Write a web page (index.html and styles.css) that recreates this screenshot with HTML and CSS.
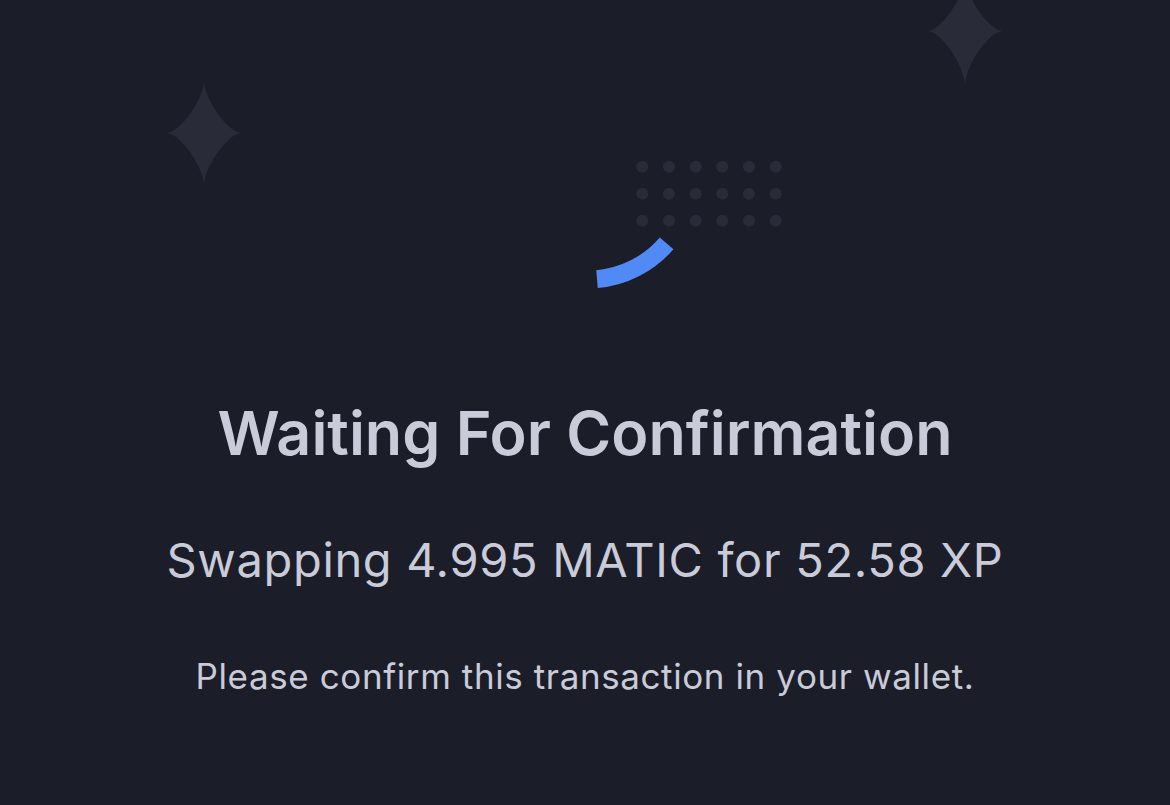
FILE: index.html
```html
<!DOCTYPE html>
<html lang="en">
    <head>
        <title>Waiting For Confirmation</title>
        <meta charset="utf-8">
        <meta name="viewport" content="width=device-width, initial-scale=1.0">
        <link rel="stylesheet" href="styles.css">
    </head>
    <body>
        <svg class="sparkle sparkle-left" width="76" height="106" viewBox="-38 -53 76 106">
            <path d="M0 -53 C0 -34 24 0 38 0 C24 0 0 34 0 53 C0 34 -24 0 -38 0 C-24 0 0 -34 0 -53 Z"/>
        </svg>
        <svg class="sparkle sparkle-right" width="76" height="110" viewBox="-38 -55 76 110">
            <path d="M0 -55 C0 -35 24 0 38 0 C24 0 0 35 0 55 C0 35 -24 0 -38 0 C-24 0 0 -35 0 -55 Z"/>
        </svg>

        <div class="modal">
            <svg class="loader" width="400" height="240" viewBox="0 0 400 240">
                <g class="dots">
                    <circle cx="257.3" cy="110.7" r="6"/><circle cx="284" cy="110.7" r="6"/><circle cx="310.7" cy="110.7" r="6"/>
                    <circle cx="337.3" cy="110.7" r="6"/><circle cx="364" cy="110.7" r="6"/><circle cx="390.7" cy="110.7" r="6"/>
                    <circle cx="257.3" cy="137.7" r="6"/><circle cx="284" cy="137.7" r="6"/><circle cx="310.7" cy="137.7" r="6"/>
                    <circle cx="337.3" cy="137.7" r="6"/><circle cx="364" cy="137.7" r="6"/><circle cx="390.7" cy="137.7" r="6"/>
                    <circle cx="257.3" cy="164.7" r="6"/><circle cx="284" cy="164.7" r="6"/><circle cx="310.7" cy="164.7" r="6"/>
                    <circle cx="337.3" cy="164.7" r="6"/><circle cx="364" cy="164.7" r="6"/><circle cx="390.7" cy="164.7" r="6"/>
                </g>
                <path class="arc" d="M212 223.1 A103.5 103.5 0 0 0 281.6 187.4"/>
            </svg>

            <h1 class="title">Waiting For Confirmation</h1>
            <p class="summary">Swapping 4.995 MATIC for 52.58 XP</p>
            <p class="hint">Please confirm this transaction in your wallet.</p>
        </div>
    </body>
</html>
```

FILE: styles.css
```css
:root {
    --background: #1b1d29;
    --text: #c9cbd9;
    --muted: #292b38;
    --accent: #5189f5;
}
html, body {
    height: 100%;
}
body {
    margin: 0;
    overflow: hidden;
    background: var(--background);
    color: var(--text);
    font-family: Inter, "Noto Sans", sans-serif;
}
.sparkle {
    position: absolute;
    fill: var(--muted);
}
.sparkle-left {
    left: 166px;
    top: 80px;
}
.sparkle-right {
    left: 927px;
    top: -24px;
}
.modal {
    display: flex;
    flex-direction: column;
    align-items: center;
    padding-top: 56px;
    text-align: center;
}
.loader {
    display: block;
}
.dots {
    fill: var(--muted);
}
.arc {
    fill: none;
    stroke: var(--accent);
    stroke-width: 18;
}
.title {
    margin: 101px 0 0;
    font-size: 61px;
    font-weight: 600;
    line-height: 72px;
}
.summary {
    margin: 63px 0 0;
    font-size: 47px;
    line-height: 56px;
    letter-spacing: 0.65px;
}
.hint {
    margin: 67px 0 0;
    font-size: 35px;
    line-height: 42px;
    letter-spacing: 0.6px;
}
```
